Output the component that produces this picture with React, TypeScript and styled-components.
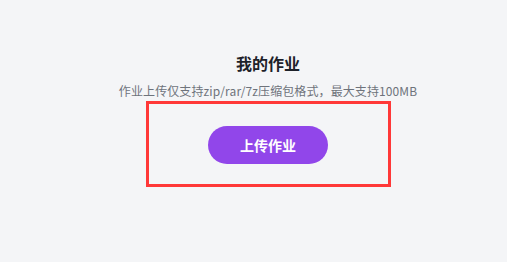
import React from "react";
import styled, { createGlobalStyle } from "styled-components";

const GlobalStyle = createGlobalStyle`
  html, body {
    margin: 0;
    padding: 0;
    background: #f4f5f7;
  }
  body {
    font-family: "Noto Sans CJK SC", "Noto Sans", sans-serif;
  }
`;

const Page = styled.div`
  width: 507px;
  height: 262px;
  box-sizing: border-box;
  padding: 51px 0 0 29px;
  background: #f4f5f7;
  display: flex;
  flex-direction: column;
  align-items: center;
`;

const Title = styled.h2`
  margin: 0;
  font-size: 16px;
  line-height: 24px;
  font-weight: 700;
  color: #1d2129;
`;

const Hint = styled.p`
  margin: 7px 0 0;
  font-size: 12px;
  line-height: 18px;
  letter-spacing: 0.1px;
  color: #6e737b;
`;

const Highlight = styled.div`
  margin-top: 1px;
  width: 245px;
  height: 86px;
  box-sizing: border-box;
  border: 3px solid #ff3838;
  display: flex;
  justify-content: center;
  padding-top: 22px;
`;

const UploadButton = styled.button`
  width: 120px;
  height: 38px;
  border: none;
  border-radius: 19px;
  background: #9146ea;
  color: #fff;
  font-family: inherit;
  font-size: 14px;
  font-weight: 700;
  cursor: pointer;
`;

const App = () => {
  return (
    <>
      <GlobalStyle />
      <Page>
        <Title>我的作业</Title>
        <Hint>作业上传仅支持zip/rar/7z压缩包格式，最大支持100MB</Hint>
        <Highlight>
          <UploadButton>上传作业</UploadButton>
        </Highlight>
      </Page>
    </>
  );
};

export default App;
